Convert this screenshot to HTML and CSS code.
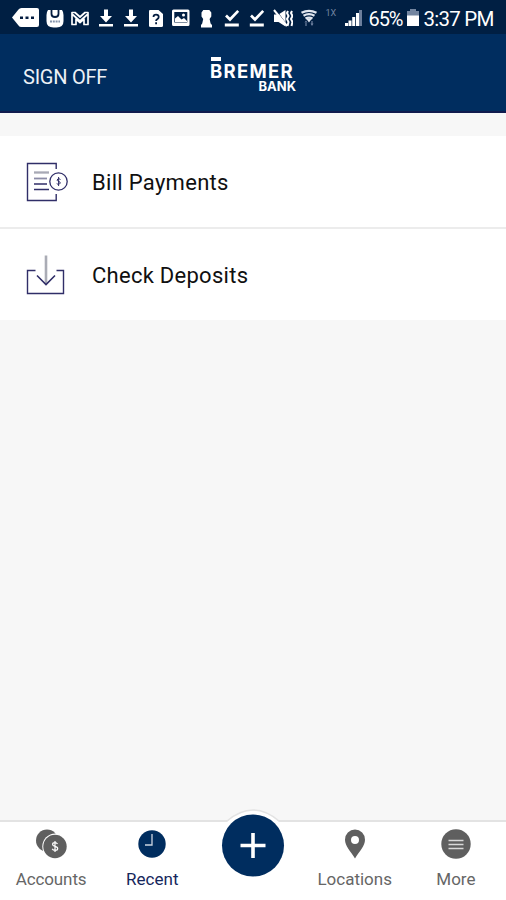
FILE: index.html
```html
<!DOCTYPE html>
<html lang="en">
<head>
<meta charset="utf-8">
<meta name="viewport" content="width=device-width, initial-scale=1">
<title>Bremer Bank</title>
<link rel="stylesheet" href="styles.css">
</head>
<body>
<div class="screen">
  <div class="status">
    <svg class="tag" viewBox="0 0 28 20"><path fill="#fff" d="M0 9.500 6.500 1.500Q7.500 0 9.500 0H25Q27 0 27 2V17Q27 19 25 19H9.500Q7.500 19 6.500 17.500Z"/><path fill="#041c40" d="M8 8.500h3v2.500H8zM13.500 8.500h3v2.500h-3zM19 8.500h3v2.500h-3z"/></svg>
    <div class="notices">
      <svg viewBox="0 0 20 20"><path fill="#fff" d="M3 1h14q1.500 2 1.500 5v6q0 6.500-7 6.500h-3q-7 0-7-6.500V6Q1.500 3 3 1z"/><path d="M6.500 1v4q0 3 3.500 3t3.500-3V1" fill="none" stroke="#041c40" stroke-width="1.800"/><path d="M5 12.500h10" stroke="#8494ac" stroke-width="1.800" stroke-dasharray="2 .8"/></svg>
      <svg viewBox="0 0 20 20"><path fill="none" stroke="#fff" stroke-width="1.700" stroke-linejoin="round" d="M2 15.500V3.500h3l5 4.500 5-4.500h3v12h-4V10l-4 3.500L6 10v5.500zM2 5l8 7 8-7"/></svg>
      <svg viewBox="0 0 20 20"><path fill="#fff" d="M8 .5h4V7h4L10 13.500 4 7h4zM3 15h14v2.500H3z"/></svg>
      <svg viewBox="0 0 20 20"><path fill="#fff" d="M8 .5h4V7h4L10 13.500 4 7h4zM3 15h14v2.500H3z"/></svg>
      <svg viewBox="0 0 20 20"><path fill="#fff" d="M4 1h8.500L17 5v11.500q0 1.500-1.500 1.500h-11Q3 18 3 16.500V2.200Q3 1 4 1z"/><path d="M7.500 8q0-2.300 2.600-2.300T12.700 8q0 1.300-1.500 2.200-1.100.7-1.100 1.800M10.100 13.300v1.900" fill="none" stroke="#041c40" stroke-width="1.800"/></svg>
      <svg viewBox="0 0 20 20"><path fill="#fff" fill-rule="evenodd" d="M2.500 .5h14.500Q18.500 .5 18.500 2v13.500Q18.500 17 17 17h-14.500Q1 17 1 15.500V2Q1 .5 2.500 .5zM3.300 3v10.500h13V3z"/><path fill="#fff" d="M4 12V9.500l3-2.500 3.500 3.500 2.500-1.500 3 3v1H4z"/><circle cx="12.500" cy="6" r="1.500" fill="#fff"/></svg>
      <svg viewBox="0 0 20 20"><path fill="#fff" d="M6.300 1h6l2 2.500v4l-1.700 2.500 1 4.500L15 16v2.500H4V16l1.200-1.500 1-4.500-1.700-2.500v-4z"/></svg>
      <svg viewBox="0 0 20 20"><path fill="none" stroke="#fff" stroke-width="2.700" d="m4 6.500 4 4 8.200-8.600"/><path fill="#fff" d="M2.800 14.500h14V17.500h-14z"/></svg>
      <svg viewBox="0 0 20 20"><path fill="none" stroke="#fff" stroke-width="2.700" d="m4 6.500 4 4 8.200-8.600"/><path fill="#fff" d="M2.800 14.500h14V17.500h-14z"/></svg>
      <svg viewBox="0 0 20 20"><path fill="#fff" d="M1 5.500h4.500l7-4.500v16.500l-7-4.500H1z"/><path stroke="#041c40" stroke-width=".8" d="m3 1 11 15"/><path stroke="#fff" stroke-width="2" d="m1 1 13 16"/><path fill="none" stroke="#fff" stroke-width="2" d="m15 2-1 2 1.500 3-1.500 3 1.500 3-1 4M19 2l-1 2 1.500 3L18 10l1.500 3-1 4"/></svg>
      <svg viewBox="0 0 20 20"><path fill="none" stroke="#e2e7ef" stroke-width="2.300" d="M3.500 3.700q7.500-3.700 15 0M5.500 6.700q5.500-3 11 0M7.500 9.500q3.500-1.800 7 0"/><path fill="#e2e7ef" d="m8 9.500 3 4 3-4z"/><path fill="#7184a3" d="M6.500 13.500h3L8 11.500zM12.500 14.500h3L14 17zM7.400 13h1.200v4H7.400zM13.400 12h1.200v3h-1.200z"/></svg>
    </div>
    <span class="network">1X</span>
    <svg class="signal" viewBox="0 0 18 18"><path fill="#fff" d="M0 14h3v3H0zM3.500 11.500h3V17h-3zM7.200 8h3v9h-3zM11 4h3v13h-3z"/><path fill="#6d7f9c" d="M14 1h3v16h-3z"/></svg>
    <span class="percent">65%</span>
    <svg class="battery" viewBox="0 0 12 18"><path fill="#7385a0" d="M3 0h6v2h3v5H0V2h3z"/><path fill="#fff" d="M0 6.500h12V17H0z"/></svg>
    <span class="time">3:37 PM</span>
  </div>

  <header class="header">
    <span class="signoff">SIGN OFF</span>
    <div class="logo"><span class="logo-bar"></span><span class="logo-name">BREMER</span><span class="logo-bank">BANK</span></div>
  </header>

  <main class="content">
    <div class="row">
      <svg class="row-icon" viewBox="0 0 44 44"><g fill="none" stroke="#302e68" stroke-width="1.400"><path d="M31.200 9V3.500H2.500v37h28.700V34"/><circle cx="33.500" cy="21.500" r="8.700" stroke-width="1.300"/></g><path d="M9 12.500h15" stroke="#a8a9b5" stroke-width="2.300"/><path d="M9 18.500h13" stroke="#8c8ca7" stroke-width="1.800"/><path d="M9 24h13M9 29.500h15" stroke="#302e68" stroke-width="1.400"/><path d="M35.500 19.500q-1.500-1.200-2.700-.5-1.500 1.300.2 2.300l1.700.5q1.500 1.300-.5 2.400-1.500.4-2.500-.7M33.600 17v9" fill="none" stroke="#302e68"/></svg>
      <span class="bill">Bill Payments</span>
    </div>
    <div class="row">
      <svg class="row-icon" viewBox="0 0 44 44"><path d="M21 2.500v28" stroke="#aaacb5" stroke-width="2.600"/><g fill="none" stroke="#302e68" stroke-width="1.400"><path d="M10.500 17.500h-8v23h36v-23h-7"/><path d="m12 22.500 9 9 9-9" stroke-width="1.600"/></g></svg>
      <span class="check">Check Deposits</span>
    </div>
  </main>

  <nav class="tabs">
    <div class="tab"><svg viewBox="0 0 32 32"><circle cx="12" cy="11.500" r="11" fill="#5f5f5f"/><circle cx="20.300" cy="17.500" r="13" fill="#fff"/><circle cx="20" cy="17.500" r="11.700" fill="#5f5f5f"/><path d="M22.500 15q-.8-1.300-2.600-1.300-2.300 0-2.300 1.800 0 1.400 2.400 1.900 2.700.6 2.700 2.100 0 1.900-2.600 1.900-2.100 0-2.900-1.500M20 12v11" fill="none" stroke="#fff" stroke-width="1.200"/></svg><span class="accounts">Accounts</span></div>
    <div class="tab active"><svg viewBox="0 0 32 32"><circle cx="16" cy="15" r="13.700" fill="#002d5f"/><path d="M16 5v11H9" fill="none" stroke="#cbd5e1" stroke-width="1.300"/></svg><span class="recent">Recent</span></div>
    <div class="tab add"><svg viewBox="0 0 76 76"><path d="M12 14A35.500 35.500 0 0 1 64 14V60H12z" fill="#fff"/><path d="M12 13Q38-9 64 13" fill="none" stroke="#e3e3e3" stroke-width="1.500"/><circle cx="38" cy="37.500" r="31" fill="#002d5f"/><path d="M38 25v25M25.500 37.500h25" stroke="#fff" stroke-width="3.600"/></svg></div>
    <div class="tab"><svg viewBox="0 0 32 32"><path fill="#5f5f5f" fill-rule="evenodd" d="M16 .5a10 10 0 0 1 10 10.200c0 6.200-5.500 11.300-10 18.800C11.500 22 6 16.900 6 10.700A10 10 0 0 1 16 .5zm0 6.500a4 4 0 1 0 0 8 4 4 0 0 0 0-8z"/></svg><span class="locations">Locations</span></div>
    <div class="tab"><svg viewBox="0 0 32 32"><circle cx="16" cy="15" r="14.700" fill="#5f5f5f"/><path d="M8.500 11.500h15M8.500 15.500h15M8.500 19.500h15" stroke="#d8d8d8" stroke-width="1.600"/></svg><span class="more">More</span></div>
  </nav>
</div>
</body>
</html>
```
FILE: styles.css
```css
* { box-sizing: border-box; }
body { margin: 0; font-family: Roboto, "Liberation Sans", sans-serif; }
.screen { width: 506px; height: 900px; display: flex; flex-direction: column; background: #f7f7f7; overflow: hidden; }
svg { display: block; flex: none; }
.status { height: 34px; flex: none; padding-left: 12px; display: flex; align-items: flex-start; background: #001f43; color: #fff; white-space: nowrap; }
.tag { width: 28px; height: 20px; margin-top: 8px; }
.notices { display: flex; width: 278.500px; flex: none; margin: 9px 0 0 2.500px; padding-left: 2.500px; }
.notices svg { width: 20px; height: 20px; margin-right: 5.300px; }
.network { width: 19px; margin: 8px 0 0 4.500px; flex: none; font-size: 9px; line-height: 11px; color: #7486a2; }
.signal { width: 18px; height: 18px; margin-top: 9px; }
.percent { width: 38px; margin-left: 6px; flex: none; font-size: 20px; line-height: 38px; letter-spacing: -1.100px; }
.battery { width: 12px; height: 18px; margin-top: 9px; }
.time { margin-left: 5px; font-size: 20.500px; line-height: 38px; letter-spacing: -.75px; }
.header { height: 79px; flex: none; display: grid; grid-template-columns: 1fr 90px 1fr; background: #002d5f; border-bottom: 2px solid #101b4e; color: #fff; }
.signoff { padding-left: 23px; font-size: 20px; line-height: 86px; color: #edf1f6; letter-spacing: -.25px; }
.logo { display: flex; flex-direction: column; width: 86px; margin: 23px 0 0 3px; font-family: Inter, "Noto Sans", sans-serif; font-weight: 700; }
.logo-bar { width: 10px; height: 4px; background: #fff; }
.logo-name { margin: 1px 0 0 -1px; font-size: 18.500px; line-height: 18px; letter-spacing: 1.300px; }
.logo-bank { align-self: flex-end; margin: 0 1px 0 0; font-size: 13px; line-height: 12px; }
.content { flex: 1; padding-top: 23px; }
.row { height: 91px; padding: 1px 0 0 25px; display: flex; align-items: center; background: #fff; font-size: 22px; color: #101010; }
.row + .row { border-top: 2px solid #ececec; height: 93px; }
.bill { letter-spacing: .3px; }
.check { letter-spacing: .27px; }
.row-icon { width: 44px; height: 44px; margin-right: 23px; }
.tabs { height: 80px; flex: none; display: grid; grid-template-columns: repeat(5, 1fr); background: #fff; border-top: 2px solid #e3e3e3; color: #666; }
.tab { display: flex; flex-direction: column; align-items: center; padding: 7px 0 0 1px; font-size: 17px; }
.tab svg { width: 32px; height: 32px; }
.tab span { line-height: 22px; margin-top: 7px; }
.accounts { letter-spacing: -.1px; }
.active { color: #16275c; }
.tab.add { padding: 0 0 0 1px; }
.add svg { width: 76px; height: 76px; margin-top: -14px; }
```
